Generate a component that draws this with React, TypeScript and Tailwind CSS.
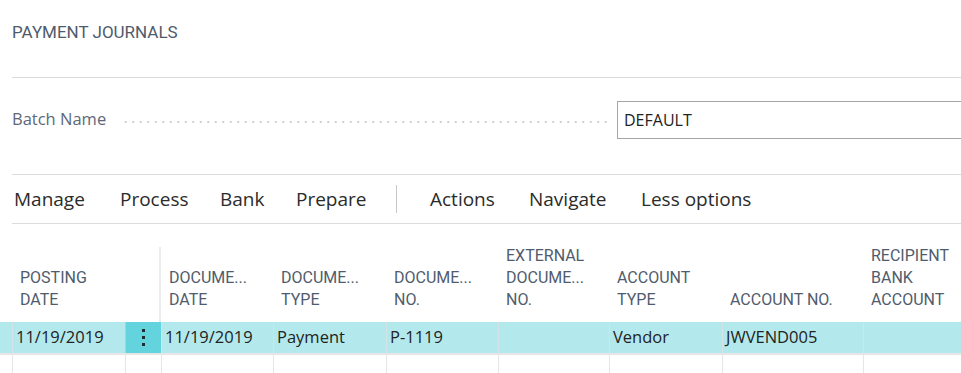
import { Fragment } from 'react';

const head = "font-['Roboto',sans-serif]";
const body = "font-['Open_Sans','Noto_Sans',sans-serif]";

const actions = [
  { label: 'Manage', w: 'w-[106px]' },
  { label: 'Process', w: 'w-[100px]' },
  { label: 'Bank', w: 'w-[76px]' },
  { label: 'Prepare', w: 'w-[101px]' },
];
const moreActions = [
  { label: 'Actions', w: 'w-[99px]' },
  { label: 'Navigate', w: 'w-[112px]' },
  { label: 'Less options', w: 'w-[120px]' },
];

const columns = [
  { label: ['POSTING', 'DATE'], value: '11/19/2019' },
  { label: [], value: '', menu: true },
  { label: ['DOCUME...', 'DATE'], value: '11/19/2019' },
  { label: ['DOCUME...', 'TYPE'], value: 'Payment' },
  { label: ['DOCUME...', 'NO.'], value: 'P-1119' },
  { label: ['EXTERNAL', 'DOCUME...', 'NO.'], value: '' },
  { label: ['ACCOUNT', 'TYPE'], value: 'Vendor' },
  { label: ['ACCOUNT NO.'], value: 'JWVEND005' },
  { label: ['RECIPIENT', 'BANK', 'ACCOUNT'], value: '' },
];

export default function App() {
  return (
    <div className="w-[961px] h-[373px] overflow-hidden bg-white">
      {/* Page title */}
      <div className="pl-3 pt-[22px] h-[77px]">
        <h1 className={`${head} text-[17px] leading-5 text-[#4f5b6b]`}>PAYMENT JOURNALS</h1>
      </div>
      <div className="ml-3 border-t border-[#d9d9d9]" />

      {/* Batch name field */}
      <div className="flex items-center pl-3 pt-[22px] h-[61px]">
        <span className={`${body} text-[16.5px] text-[#5d6878] w-[110px] shrink-0`}>Batch Name</span>
        <span className="w-[486px] shrink-0 h-[2px] mt-1 bg-[radial-gradient(circle,#cfcfcf_0.8px,transparent_1px)] bg-[length:7.5px_2px]" />
        <div className="ml-[9px] w-[400px] shrink-0 h-[38px] border border-[#a6a6a6] flex items-center pl-[6px]">
          <span className={`${body} text-[16px] text-[#222]`}>DEFAULT</span>
        </div>
      </div>

      {/* Action bar */}
      <div className="mt-[35px] ml-3 border-t border-b border-[#dcdcdc] h-[50px] flex items-center">
        {actions.map((a) => (
          <span key={a.label} className={`${body} ${a.w} text-[19px] text-[#2b2b2b] pl-[2px] whitespace-nowrap`}>{a.label}</span>
        ))}
        <span className="w-px h-7 bg-[#c8c8c8] ml-px mr-[33px]" />
        {moreActions.map((a) => (
          <span key={a.label} className={`${body} ${a.w} text-[19px] text-[#2b2b2b] whitespace-nowrap`}>{a.label}</span>
        ))}
      </div>

      {/* Journal lines */}
      <div className="grid grid-cols-[12px_113px_36px_112px_113px_112px_111px_113px_141px_1fr]">
        {/* header */}
        <div />
        {columns.map((c, i) =>
          i === 1 ? (
            <div key={'h' + i} className="mt-[23px] border-r-2 border-[#ececec]" />
          ) : (
            <div
              key={'h' + i}
              className={`h-[98px] flex flex-col justify-end pb-[11px] pl-2 ${head} text-[16px] leading-[22px] text-[#505c6d]`}
            >
              {c.label.map((l) => (
                <span key={l} className="whitespace-nowrap">{l}</span>
              ))}
            </div>
          )
        )}

        {/* selected row */}
        <div className="bg-[#b3e9ec] h-[31px]" />
        {columns.map((c, i) => (
          <Fragment key={'r' + i}>
            {c.menu ? (
              <div className="bg-[#63d4dd] h-[31px] border-l border-[#9fd6da] flex flex-col items-center justify-center gap-[4px]">
                <span className="w-[3px] h-[3px] bg-[#1f2d33]" />
                <span className="w-[3px] h-[3px] bg-[#1f2d33]" />
                <span className="w-[3px] h-[3px] bg-[#1f2d33]" />
              </div>
            ) : (
              <div className={`bg-[#b3e9ec] h-[31px] border-l border-[#d2e4e5] pl-[3px] flex items-center ${body} text-[16.5px] text-[#222]`}>
                {c.value}
              </div>
            )}
          </Fragment>
        ))}

        {/* empty row */}
        <div className="h-[20px] border-t-2 border-[#e6e6e6]" />
        {columns.map((c, i) => (
          <div key={'e' + i} className="h-[20px] border-t-2 border-l border-[#e6e6e6]" />
        ))}
      </div>
    </div>
  );
}
